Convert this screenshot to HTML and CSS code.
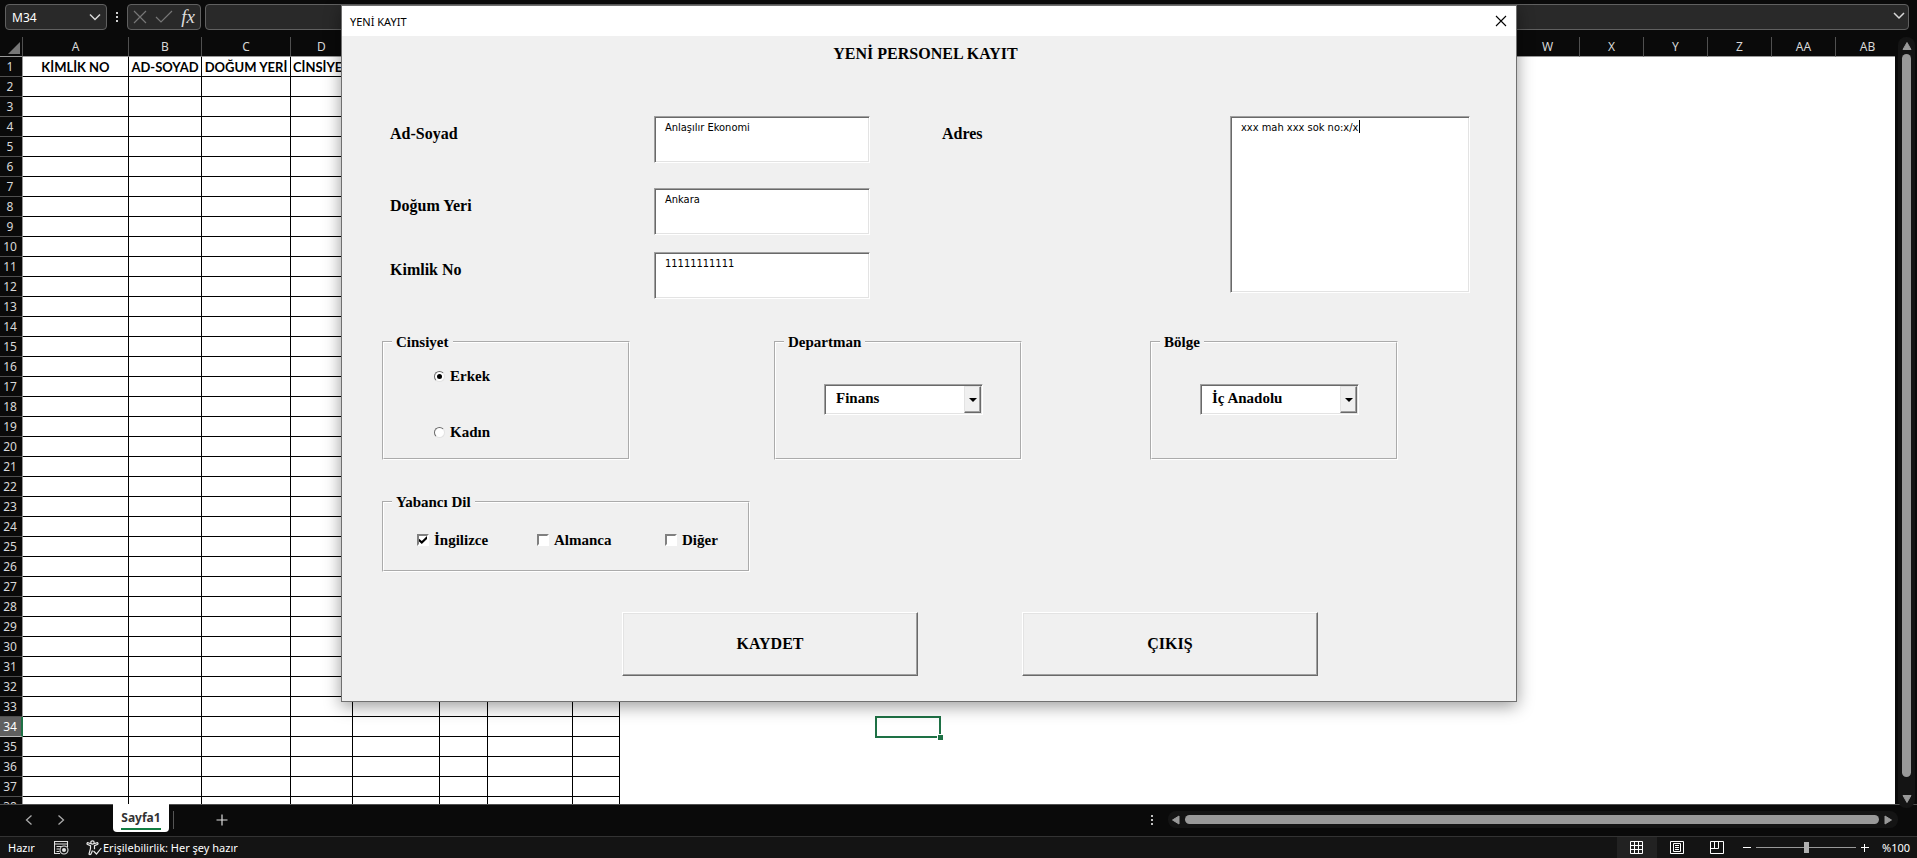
FILE: index.html
```html
<!DOCTYPE html>
<html lang="tr">
<head>
<meta charset="utf-8">
<title>Yeni Kayıt</title>
<link rel="stylesheet" href="styles.css">
</head>
<body>
<div class="app">
  <div class="formula-bar">
    <button class="name-box" type="button"><span>M34</span>
      <svg width="12" height="8" viewBox="0 0 12 8"><path d="M1 1.500l5 5 5-5" fill="none" stroke="#d8d8d8" stroke-width="1.500"/></svg>
    </button>
    <svg class="dots" width="4" height="12" viewBox="0 0 4 12"><path d="M1 1h2v2H1zM1 5h2v2H1zM1 9h2v2H1z" fill="#d0d0d0"/></svg>
    <div class="fx-box">
      <svg width="14" height="14" viewBox="0 0 14 14"><path d="M1 1l12 12M13 1L1 13" fill="none" stroke="#777" stroke-width="1.200"/></svg>
      <svg width="18" height="14" viewBox="0 0 18 14"><path d="M1 7l5 5L17 1" fill="none" stroke="#777" stroke-width="1.200"/></svg>
      <span class="fx">fx</span>
    </div>
    <div class="formula-box">
      <input type="text" aria-label="Formül çubuğu">
      <svg width="12" height="8" viewBox="0 0 12 8"><path d="M1 1l5 5 5-5" fill="none" stroke="#d8d8d8" stroke-width="1.500"/></svg>
    </div>
  </div>

  <div class="workspace">
    <div class="grid-view"><table class="sheet" id="sheet"></table></div>
    <div class="vscroll">
      <svg width="10" height="8" viewBox="0 0 10 8"><path d="M5 0.500L9 7.500H1z" fill="#999" stroke="#999" stroke-linejoin="round"/></svg>
      <div class="vthumb"></div>
      <svg width="10" height="8" viewBox="0 0 10 8"><path d="M5 7.500L9 0.500H1z" fill="#999" stroke="#999" stroke-linejoin="round"/></svg>
    </div>
  </div>

  <div class="tab-bar">
    <div class="tab-nav">
      <svg width="8" height="10" viewBox="0 0 8 10"><path d="M6.500 0.500L1.500 5l5 4.500" fill="none" stroke="#aaa" stroke-width="1.300"/></svg>
      <svg width="8" height="10" viewBox="0 0 8 10"><path d="M1.500 0.500L6.500 5l-5 4.500" fill="none" stroke="#aaa" stroke-width="1.300"/></svg>
    </div>
    <button class="tab" type="button"><span>Sayfa1</span></button>
    <span class="tab-sep"></span>
    <svg class="add" width="12" height="12" viewBox="0 0 12 12"><path d="M6 0.500v11M0.500 6h11" fill="none" stroke="#ddd" stroke-width="1.200"/></svg>
    <svg class="dots" width="4" height="12" viewBox="0 0 4 12"><path d="M1 1h2v2H1zM1 5h2v2H1zM1 9h2v2H1z" fill="#c0c0c0"/></svg>
    <div class="hscroll">
      <svg width="8" height="10" viewBox="0 0 8 10"><path d="M0.500 5L7 1v8z" fill="#999" stroke="#999" stroke-linejoin="round"/></svg>
      <div class="hthumb"></div>
      <svg width="8" height="10" viewBox="0 0 8 10"><path d="M7.500 5L1 1v8z" fill="#999" stroke="#999" stroke-linejoin="round"/></svg>
    </div>
  </div>

  <div class="status-bar">
    <span class="ready">Hazır</span>
    <svg class="macro" width="15" height="14" viewBox="0 0 15 14"><g fill="none" stroke="#e0e0e0" stroke-width="1.100"><path d="M6 12.500H0.500V0.500h13V6M0.500 3h13M2.500 5.500h5M2.500 8h3M2.500 10.500h3"/><circle cx="10" cy="9" r="4"/></g><circle cx="10" cy="9" r="2" fill="#e0e0e0"/></svg>
    <svg class="access" width="16" height="16" viewBox="0 0 16 16"><g fill="none" stroke="#e8e8e8" stroke-width="1.200"><circle cx="6.500" cy="2.500" r="1.700"/><path d="M5 3.800L1.700 2.600Q0.600 3.200 1.200 4.300L4.500 5.700V8.500L3 14Q4 15.200 5 14L6.500 10.500M8 3.800l3.300-1.200q1.100 0.600 0.500 1.700L8.500 5.700v3.500M7.500 11l3 3L15.300 8"/></g></svg>
    <span class="grow">Erişilebilirlik: Her şey hazır</span>
    <button class="view on" type="button" aria-label="Normal"><svg width="14" height="14" viewBox="0 0 14 14"><path d="M0.500 0.500h12v12h-12zM4.500 0.500v12M8.500 0.500v12M0.500 4.500h12M0.500 8.500h12" fill="none" stroke="#fff"/></svg></button>
    <button class="view" type="button" aria-label="Sayfa Düzeni"><svg width="14" height="14" viewBox="0 0 14 14"><path d="M0.500 0.500h13v12h-13zM3.500 2.500h7v8h-7zM5 4.500h4M5 6.500h4M5 8.500h4" fill="none" stroke="#fff"/></svg></button>
    <button class="view" type="button" aria-label="Sayfa Sonu Önizleme"><svg width="14" height="14" viewBox="0 0 14 14"><path d="M0.500 0.500h13v12h-13zM0.500 7.500h8v-7M4.500 0.500v7" fill="none" stroke="#fff"/></svg></button>
    <svg class="zoom-out" width="8" height="8" viewBox="0 0 8 8"><path d="M0 3.500h8" stroke="#fff"/></svg>
    <input class="zoom" type="range" min="0" max="100" value="50" aria-label="Yakınlaştırma">
    <svg class="zoom-in" width="8" height="8" viewBox="0 0 8 8"><path d="M0 3.500h8M3.500 0v8" stroke="#fff"/></svg>
    <span class="pct">%100</span>
  </div>

  <section class="dialog" role="dialog" aria-labelledby="dlg-title">
    <header class="dialog-title">
      <span id="dlg-title">YENİ KAYIT</span>
      <button class="close" type="button" aria-label="Kapat"><svg width="12" height="12" viewBox="0 0 12 12"><path d="M1 1l10 10M11 1L1 11" stroke="#000" stroke-width="1.100"/></svg></button>
    </header>
    <form class="dialog-body">
      <h1>YENİ PERSONEL KAYIT</h1>
      <div class="fields">
        <label for="name">Ad-Soyad</label>
        <textarea id="name">Anlaşılır Ekonomi</textarea>
        <label class="col-address" for="address">Adres</label>
        <div class="address">
          <textarea id="address">xxx mah xxx sok no:x/x</textarea>
          <span class="caret"></span>
        </div>
        <label for="birth">Doğum Yeri</label>
        <textarea id="birth">Ankara</textarea>
        <label for="idno">Kimlik No</label>
        <textarea id="idno">11111111111</textarea>
      </div>
      <div class="groups">
        <fieldset class="gender">
          <legend>Cinsiyet</legend>
          <label><input type="radio" name="gender" checked>Erkek</label>
          <label><input type="radio" name="gender">Kadın</label>
        </fieldset>
        <fieldset class="pick">
          <legend>Departman</legend>
          <div class="combo">
            <select aria-label="Departman"><option>Finans</option></select>
            <span class="combo-btn"></span>
          </div>
        </fieldset>
        <fieldset class="pick">
          <legend>Bölge</legend>
          <div class="combo">
            <select aria-label="Bölge"><option>İç Anadolu</option></select>
            <span class="combo-btn"></span>
          </div>
        </fieldset>
      </div>
      <fieldset class="languages">
        <legend>Yabancı Dil</legend>
        <label><input type="checkbox" checked>İngilizce</label>
        <label><input type="checkbox">Almanca</label>
        <label><input type="checkbox">Diğer</label>
      </fieldset>
      <div class="actions">
        <button type="button">KAYDET</button>
        <button type="button">ÇIKIŞ</button>
      </div>
    </form>
  </section>
</div>
<script src="sheet.js"></script>
</body>
</html>
```
FILE: sheet.js
```js
const widths = [106, 73, 89, 62, 87, 48, 85, 47];
const headings = ["KİMLİK NO", "AD-SOYAD", "DOĞUM YERİ", "CİNSİYET"];
const columnCount = 28;
const rowCount = 38;

function columnName(i) {
  return i < 26 ? String.fromCharCode(65 + i) : "A" + String.fromCharCode(39 + i);
}

let html = '<colgroup><col style="width:23px">';
for (let c = 0; c < columnCount; c++) {
  html += `<col style="width:${widths[c] || 64}px">`;
}
html += '</colgroup><thead><tr><th class="corner"><svg width="12" height="12" viewBox="0 0 12 12"><path d="M12 0v12H0z" fill="#777"/></svg></th>';
for (let c = 0; c < columnCount; c++) {
  html += `<th scope="col">${columnName(c)}</th>`;
}
html += "</tr></thead><tbody>";
for (let r = 1; r <= rowCount; r++) {
  html += `<tr><th scope="row"${r === 34 ? ' class="active"' : ""}>${r}</th>`;
  for (let c = 0; c < columnCount; c++) {
    const cls = c < widths.length ? "ruled" : r === 34 && c === 12 ? "selected" : "";
    html += `<td class="${cls}">${(r === 1 && headings[c]) || ""}</td>`;
  }
  html += "</tr>";
}
document.getElementById("sheet").innerHTML = html + "</tbody>";
```
FILE: styles.css
```css
* { box-sizing: border-box; }
body { margin: 0; background: #0a0a0a; font-family: "Noto Sans", sans-serif; font-size: 12px; color: #fff; }
button { font: inherit; color: inherit; border: 0; padding: 0; background: none; }
svg { display: block; flex: none; }

.app { position: relative; height: 100vh; overflow: hidden; display: grid; grid-template-rows: 37px minmax(0, 1fr) 32px 22px; }

/* Formula bar */
.formula-bar { display: flex; align-items: center; padding: 4px 8px 7px 5px; }
.name-box, .fx-box, .formula-box { display: flex; align-items: center; height: 26px; background: #292929; border: 1px solid #606060; border-radius: 4px; }
.name-box { width: 102px; justify-content: space-between; padding: 0 5px 0 6px; }
.formula-bar .dots { margin: 0 8px; }
.fx-box { width: 74px; justify-content: space-between; padding: 0 5px 0 5px; margin-right: 4px; }
.fx { font: italic 19px/20px "Liberation Serif", serif; color: #ddd; }
.formula-box { flex: 1; padding: 0 3px 2px 0; }
.formula-box input { flex: 1; border: 0; background: none; color: #fff; }

/* Sheet */
.workspace { display: grid; grid-template-columns: minmax(0, 1fr) 22px; min-height: 0; }
.grid-view { overflow: hidden; background: #fff; }
.sheet { table-layout: fixed; border-collapse: separate; border-spacing: 0; width: 1900px; }
.sheet th, .sheet td { height: 20px; padding: 0; line-height: 18px; overflow: hidden; white-space: nowrap; text-align: center; }
.sheet th { background: #0a0a0a; color: #d8d8d8; font-weight: 400; font-size: 12px; padding-top: 1px; border-right: 1px solid #505050; border-bottom: 1px solid #505050; }
.sheet thead th { border-bottom-color: #999; }
.sheet tbody th { border-right-color: #999; padding-right: 2px; }
.sheet .corner svg { margin: 2px 0 0 8px; }
.sheet .active { background: #606060; color: #fff; border-right: 2px solid #1e7145; border-bottom-color: #bbb; padding-right: 1px; }
.sheet td { color: #000; font: bold 13px/18px Lato, sans-serif; }
.sheet .ruled { border-right: 1px solid #000; border-bottom: 1px solid #000; }
.sheet .selected { position: relative; overflow: visible; outline: 2px solid #1e7145; outline-offset: -1px; }
.sheet .selected::after { content: ""; position: absolute; right: -3px; bottom: -3px; width: 5px; height: 5px; background: #1e7145; border-left: 1px solid #fff; border-top: 1px solid #fff; }

.vscroll { position: relative; display: flex; flex-direction: column; align-items: center; width: 17px; margin: 0 0 -4px 3px; padding: 5px 0; gap: 4px; border-radius: 8px; background: #141414; z-index: 1; }
.vthumb { flex: 1; width: 9px; margin-bottom: 14px; border-radius: 5px; background: #999; }

/* Tabs */
.tab-bar { display: flex; align-items: center; border-top: 1px solid #505050; padding: 0 19px 2px 0; }
.tab-nav { display: flex; gap: 24px; width: 113px; padding-left: 25px; }
.tab { align-self: flex-start; height: 28px; width: 56px; margin-top: -1px; background: #fff; color: #333; font-weight: 700; border-radius: 0 0 4px 4px; }
.tab span { display: block; margin: 0 8px; border-bottom: 2px solid #107c41; line-height: 21px; }
.tab-sep { width: 1px; height: 18px; margin-left: 4px; background: #555; }
.add { margin-left: 42px; }
.tab-bar .dots { margin-left: auto; }
.hscroll { display: flex; align-items: center; gap: 5px; width: 730px; height: 17px; margin-left: 14px; padding: 0 6px 0 4px; border-radius: 8px; background: #141414; }
.hthumb { flex: 1; height: 9px; border-radius: 5px; background: #999; }

/* Status bar */
.status-bar { display: flex; align-items: center; background: #141414; border-top: 1px solid #333; font-size: 11px; }
.ready { width: 46px; padding-left: 8px; }
.macro { margin-left: 8px; }
.access { margin: 0 1px 0 17px; }
.grow { flex: 1; }
.view { display: grid; place-items: center; width: 40px; align-self: stretch; }
.view.on { background: #222; }
.zoom-out { margin: 0 5px 0 6px; }
.zoom { appearance: none; width: 100px; height: 11px; margin: 0; background: linear-gradient(#999, #999) center / 100% 1px no-repeat; }
.zoom::-webkit-slider-thumb { appearance: none; width: 5px; height: 11px; background: #b0b0b0; }
.zoom-in { margin: 0 13px 0 5px; }
.pct { width: 35px; }

/* Dialog */
.dialog { position: absolute; top: 5px; left: 341px; width: calc(100% - 741px); background: #f0f0f0; color: #000; border: 1px solid #707070; box-shadow: 0 4px 16px rgba(0, 0, 0, 0.4); z-index: 2; }
.dialog-title { display: flex; align-items: center; justify-content: space-between; height: 30px; padding: 0 9px 0 8px; background: #fff; font-size: 11px; }
.dialog-body { padding: 8px 0 25px; font: bold 15px/20px "Liberation Serif", serif; }
.dialog-body h1 { margin: 0 7px 52px 0; font-size: 16px; line-height: 20px; text-align: center; }

.fields { display: grid; grid-template-columns: 264fr 216fr 72fr 288fr 240fr; grid-template-rows: 72px 64px 47px; align-items: start; margin: 0 46px 0 48px; }
.fields label { grid-column: 1; padding-top: 8px; font-size: 16px; }
.fields .col-address { grid-column: 4; }
textarea { grid-column: 2; display: block; width: 100%; height: 47px; padding: 4px 10px; resize: none; overflow: hidden; outline: 0; border: 1px solid; border-color: #a0a0a0 #fff #fff #a0a0a0; box-shadow: inset 1px 1px #696969, inset -1px -1px #e3e3e3; background: #fff; border-radius: 0; color: #000; font: 11px/14px "DejaVu Sans Condensed", sans-serif; }
.address { position: relative; grid-column: 5; grid-row: 1 / 4; }
.address textarea { height: 177px; }
.caret { position: absolute; left: 129px; top: 4px; width: 1px; height: 13px; background: #000; }

fieldset { margin: 0; padding: 0; border: 2px groove #fff; min-width: 0; }
legend { margin-left: 8px; padding: 0 4px; line-height: 20px; }
.groups { display: grid; grid-template-columns: 392fr 376fr 248fr; margin: 33px 118px 32px 40px; }
.groups fieldset { width: 248px; height: 128px; }
.gender { display: grid; align-content: start; gap: 36px; }
.gender label { margin-left: 50px; }
.gender label:first-of-type { margin-top: 14px; }
fieldset label { display: flex; align-items: center; gap: 5px; line-height: 20px; }
input[type="radio"], input[type="checkbox"] { appearance: none; flex: none; display: grid; place-items: center; margin: 0; width: 11px; height: 11px; background: #fff; border: 1px solid; border-color: #696969 #e3e3e3 #e3e3e3 #696969; }
input[type="radio"] { border-radius: 50%; }
input[type="radio"]:checked::before { content: ""; width: 5px; height: 5px; border-radius: 50%; background: #000; }
input[type="checkbox"] { width: 12px; height: 12px; border-width: 2px; border-color: #808080 #fff #fff #808080; }
input[type="checkbox"]:checked::before { content: ""; width: 8px; height: 8px; background: #000; clip-path: polygon(0 35%, 35% 62%, 100% 0, 100% 38%, 35% 100%, 0 70%); }

.combo { display: grid; width: 159px; margin: 32px 0 0 48px; padding: 1px; border: 1px solid; border-color: #a0a0a0 #fff #fff #a0a0a0; box-shadow: inset 1px 1px #696969, inset -1px -1px #e3e3e3; background: #fff; }
.combo select { grid-area: 1 / 1; appearance: none; height: 27px; padding: 0 24px 3px 10px; border: 0; border-radius: 0; background: #fff; font: inherit; color: #000; }
.combo-btn { grid-area: 1 / 1; justify-self: end; display: grid; place-items: center; width: 17px; background: #f0f0f0; border: 1px solid; border-color: #e3e3e3 #696969 #696969 #e3e3e3; box-shadow: inset -1px -1px #a0a0a0; pointer-events: none; }
.combo-btn::before { content: ""; border: 4px solid transparent; border-top-color: #000; border-bottom: 0; }

.languages { display: grid; grid-template-columns: 33px 120px 128px auto; width: 368px; height: 80px; margin-left: 40px; padding-top: 18px; align-content: start; }
.languages label:first-of-type { grid-column: 2; }
.actions { display: flex; gap: 104px; margin: 40px 0 0 280px; }
.actions button { width: 296px; height: 64px; font-size: 16px; background: #f0f0f0; border: 1px solid; border-color: #fff #696969 #696969 #fff; box-shadow: inset -1px -1px #a0a0a0, inset 1px 1px #e3e3e3; }
```
